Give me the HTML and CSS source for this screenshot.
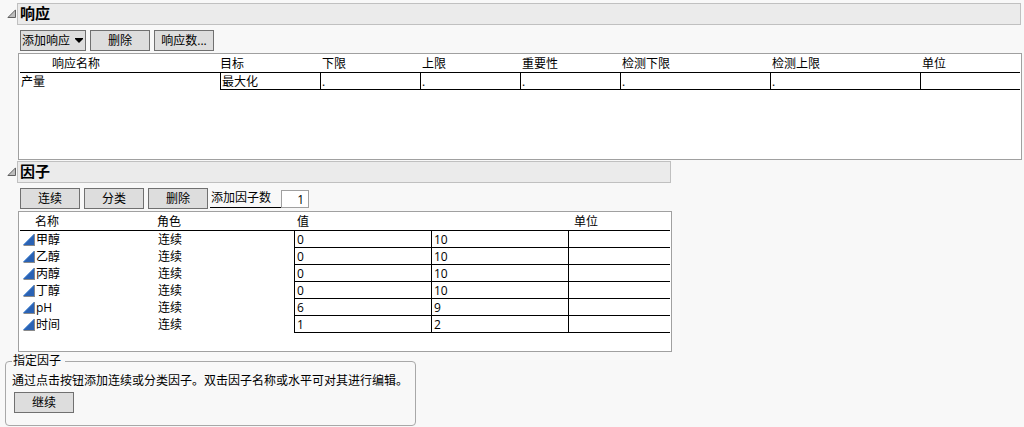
FILE: index.html
```html
<!doctype html>
<html lang="zh-CN">
<head>
    <meta charset="utf-8">
    <title>响应与因子</title>

    <link rel="stylesheet" href="styles.css">

</head>
<body>

    <svg width="0" height="0" class="Sprites" aria-hidden="true">
        <symbol id="disclosure" viewBox="0 0 9 9">
            <path d="M8.5 0.9V8.5H0.9Z" fill="#bdbdbd" stroke="#606060" />
        </symbol>
        <symbol id="continuous" viewBox="0 0 12 12">
            <path d="M12 0V12H0L1 11L11 0Z" fill="#8a8a8a" />
            <path d="M11 0V11H0Z" fill="#2a62b4" />
            <path d="M0.4 10.8L10.8 0.4" fill="none" stroke="#6ea3e0" />
        </symbol>
    </svg>

    <!-- responses -->
    <section class="Outline">
        <div class="Outline-head">
            <svg class="Disclosure" aria-hidden="true"><use href="#disclosure" /></svg>
            <h2>响应</h2>
        </div>
        <div class="Outline-body">
            <div class="Toolbar">
                <button type="button" class="Button Button--menu">添加响应
                    <svg class="Caret" viewBox="0 0 8 5" aria-hidden="true"><path d="M0 0H8V1L4 5L0 1Z" /></svg>
                </button>
                <button type="button" class="Button">删除</button>
                <button type="button" class="Button">响应数...</button>
            </div>
            <div class="Panel">
                <table class="Grid Grid--responses">
                    <colgroup>
                        <col class="w-200"><col class="w-100"><col class="w-100"><col class="w-100">
                        <col class="w-100"><col class="w-150"><col class="w-150"><col>
                    </colgroup>
                    <thead>
                        <tr>
                            <th>响应名称</th>
                            <th class="Goal">目标</th>
                            <th>下限</th>
                            <th>上限</th>
                            <th>重要性</th>
                            <th>检测下限</th>
                            <th>检测上限</th>
                            <th>单位</th>
                        </tr>
                    </thead>
                    <tbody>
                        <tr>
                            <td>产量</td>
                            <td class="Cell">最大化</td>
                            <td class="Cell">.</td>
                            <td class="Cell">.</td>
                            <td class="Cell">.</td>
                            <td class="Cell">.</td>
                            <td class="Cell">.</td>
                            <td class="Cell"></td>
                        </tr>
                    </tbody>
                </table>
            </div>
        </div>
    </section>

    <!-- factors -->
    <section class="Outline Outline--fit">
        <div class="Outline-head">
            <svg class="Disclosure" aria-hidden="true"><use href="#disclosure" /></svg>
            <h2>因子</h2>
        </div>
        <div class="Outline-body">
            <div class="Toolbar">
                <button type="button" class="Button">连续</button>
                <button type="button" class="Button">分类</button>
                <button type="button" class="Button">删除</button>
                <div class="Count">
                    <label for="factorCount">添加因子数</label>
                    <input id="factorCount" type="text" value="1">
                </div>
            </div>
            <div class="Panel Panel--factors">
                <table class="Grid Grid--factors">
                    <colgroup>
                        <col class="w-135"><col class="w-139"><col class="w-137"><col class="w-137"><col>
                    </colgroup>
                    <thead>
                        <tr>
                            <th>名称</th>
                            <th>角色</th>
                            <th colspan="2">值</th>
                            <th class="Unit">单位</th>
                        </tr>
                    </thead>
                    <tbody>
                        <tr>
                            <td><div class="Name"><svg aria-hidden="true"><use href="#continuous" /></svg>甲醇</div></td>
                            <td>连续</td>
                            <td class="Cell">0</td>
                            <td class="Cell">10</td>
                            <td class="Cell"></td>
                        </tr>
                        <tr>
                            <td><div class="Name"><svg aria-hidden="true"><use href="#continuous" /></svg>乙醇</div></td>
                            <td>连续</td>
                            <td class="Cell">0</td>
                            <td class="Cell">10</td>
                            <td class="Cell"></td>
                        </tr>
                        <tr>
                            <td><div class="Name"><svg aria-hidden="true"><use href="#continuous" /></svg>丙醇</div></td>
                            <td>连续</td>
                            <td class="Cell">0</td>
                            <td class="Cell">10</td>
                            <td class="Cell"></td>
                        </tr>
                        <tr>
                            <td><div class="Name"><svg aria-hidden="true"><use href="#continuous" /></svg>丁醇</div></td>
                            <td>连续</td>
                            <td class="Cell">0</td>
                            <td class="Cell">10</td>
                            <td class="Cell"></td>
                        </tr>
                        <tr>
                            <td><div class="Name"><svg aria-hidden="true"><use href="#continuous" /></svg>pH</div></td>
                            <td>连续</td>
                            <td class="Cell">6</td>
                            <td class="Cell">9</td>
                            <td class="Cell"></td>
                        </tr>
                        <tr>
                            <td><div class="Name"><svg aria-hidden="true"><use href="#continuous" /></svg>时间</div></td>
                            <td>连续</td>
                            <td class="Cell">1</td>
                            <td class="Cell">2</td>
                            <td class="Cell"></td>
                        </tr>
                    </tbody>
                </table>
            </div>
        </div>
    </section>

    <!-- current step -->
    <fieldset class="Step">
        <legend>指定因子</legend>
        <p>通过点击按钮添加连续或分类因子。双击因子名称或水平可对其进行编辑。</p>
        <button type="button" class="Button">继续</button>
    </fieldset>

</body>
</html>
```

FILE: styles.css
```css
*, *:before, *:after {
    box-sizing: border-box;
    margin: 0;
    padding: 0;
}

body {
    padding: 3px 2px 0 0;
    background: #f8f8f8;
    color: #000;
    font: 12px/16px "Open Sans", "Noto Sans CJK SC", sans-serif;
}

button, input {
    font: inherit;
    color: inherit;
}

.Sprites {
    position: absolute;
}

/* outline sections */

.Outline {
    margin-bottom: 1px;
}

.Outline--fit {
    width: max-content;
}

.Outline-head {
    display: flex;
    align-items: flex-start;
    gap: 1px;
    padding: 0 1px 0 7px;
}

.Disclosure {
    flex: none;
    width: 9px;
    height: 9px;
    margin-top: 6px;
}

.Outline-head h2 {
    flex: 1;
    height: 22px;
    padding-left: 2px;
    border: 1px solid #c0c0c0;
    background: #ebebeb;
    font-size: 15px;
    line-height: 18px;
}

.Outline-body {
    padding-left: 18px;
}

/* buttons */

.Toolbar {
    display: flex;
    gap: 4px;
    padding: 5px 2px 2px;
}

.Button {
    min-width: 60px;
    height: 21px;
    border: 1px solid #707070;
    background: #ddd;
    line-height: 19px;
}

.Button--menu {
    display: flex;
    align-items: center;
    gap: 5px;
    padding: 0 2px 0 1px;
}

.Caret {
    width: 8px;
    height: 5px;
}

.Count {
    display: flex;
    align-items: flex-end;
    margin-left: -2px;
    padding-bottom: 1px;
}

.Count label {
    width: 71px;
    height: 18px;
    padding-left: 1px;
    border-bottom: 1px solid #000;
}

.Count input {
    width: 28px;
    height: 18px;
    padding-right: 4px;
    border: 1px solid #a0a0a0;
    background: #fff;
    line-height: 16px;
    text-align: right;
}

/* tables */

.Panel {
    min-height: 107px;
    padding: 0 1px;
    border: 1px solid #a0a0a0;
    background: #fff;
}

.Panel--factors {
    padding-bottom: 18px;
}

.Grid {
    width: 100%;
    table-layout: fixed;
    border-spacing: 0;
}

.Grid--factors {
    width: 650px;
}

.Grid th {
    height: 19px;
    padding-top: 2px;
    padding-left: 2px;
    border-bottom: 1px solid #000;
    font-weight: normal;
    line-height: 16px;
    text-align: left;
}

.Grid td {
    height: 17px;
    padding-left: 1px;
    line-height: 16px;
}

.Grid .Cell {
    padding-top: 1px;
    border-left: 1px solid #000;
    border-bottom: 1px solid #000;
    line-height: 15px;
}

.Grid--responses th:first-child {
    padding-left: 32px;
}

.Grid--responses .Goal {
    padding-left: 0;
}

.Grid--factors th:first-child {
    padding-left: 15px;
}

.Grid--factors th:nth-child(3) {
    padding-left: 3px;
}

.Grid--factors .Unit {
    padding-left: 6px;
}

.Grid--factors td:nth-child(2) {
    padding-left: 3px;
}

.Grid--factors .Cell {
    padding-left: 2px;
}

.Name {
    display: flex;
    align-items: center;
    gap: 1px;
    padding-left: 2px;
}

.Name svg {
    width: 12px;
    height: 12px;
}

.w-100 { width: 100px; }
.w-135 { width: 135px; }
.w-137 { width: 137px; }
.w-139 { width: 139px; }
.w-150 { width: 150px; }
.w-200 { width: 200px; }

/* step box */

.Step {
    width: max-content;
    margin-left: 5px;
    padding: 4px 7px 12px 6px;
    border: 1px solid #a8a8a8;
    border-radius: 4px;
}

.Step legend {
    padding: 0 4px 0 1px;
}

.Step .Button {
    display: block;
    margin: 3px 0 0 2px;
}
```
